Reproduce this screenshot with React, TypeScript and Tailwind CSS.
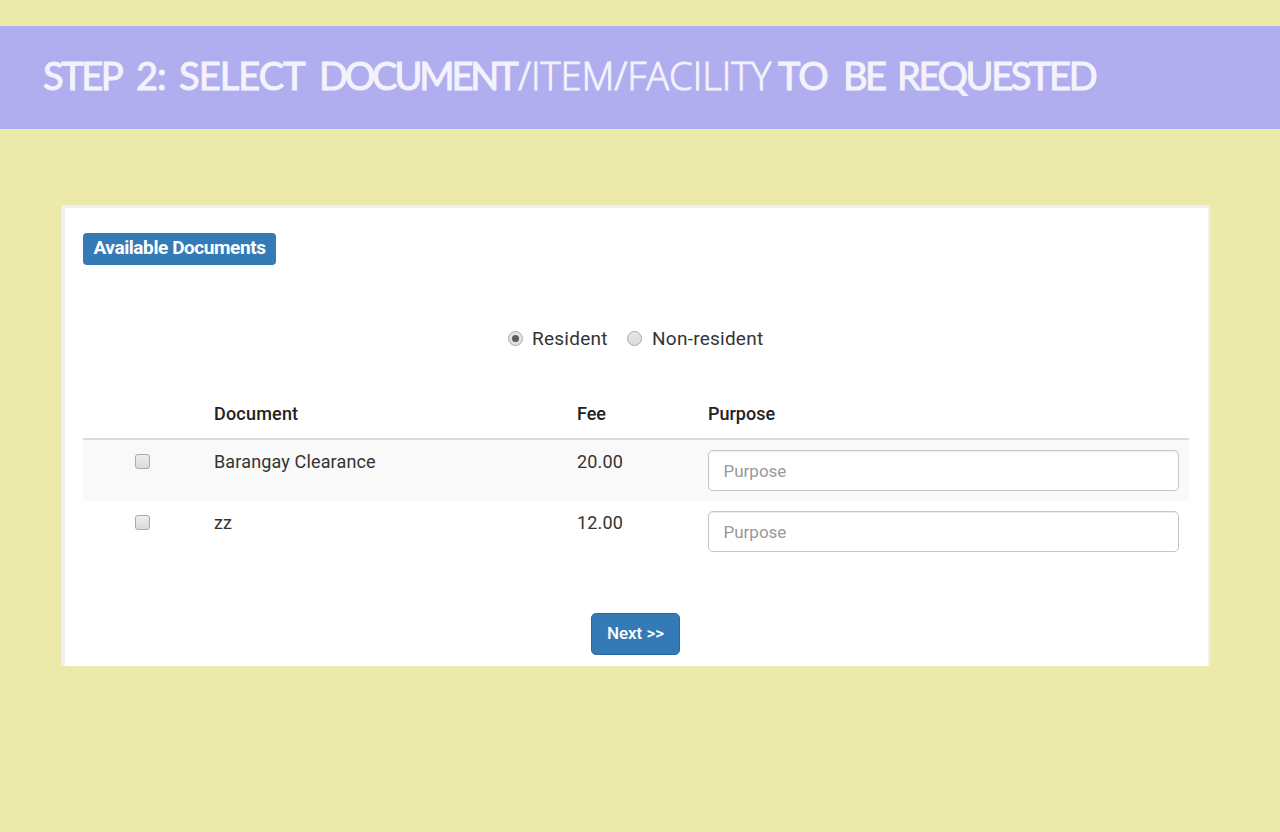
import React from 'react';

const rows = [
  { name: 'Barangay Clearance', fee: '20.00' },
  { name: 'zz', fee: '12.00' },
];

const words = [
  { text: 'STEP', style: "w-[93px] tracking-[-2.4px] font-['Lato',sans-serif] [-webkit-text-stroke:1px_#f4f3fd]" },
  { text: '2:', style: "w-[43px] tracking-[-1px] font-['Lato',sans-serif] [-webkit-text-stroke:1px_#f4f3fd]" },
  { text: 'SELECT', style: "w-[140px] tracking-[-0.9px] font-['Lato',sans-serif] [-webkit-text-stroke:1px_#f4f3fd]" },
  { text: 'DOCUMENT', style: "w-[199px] tracking-[-3.1px] font-['Lato',sans-serif] [-webkit-text-stroke:1px_#f4f3fd]" },
  { text: '/ITEM/FACILITY', style: "w-[260px] tracking-[0px] font-['Open_Sans',sans-serif] font-light text-[38px] [-webkit-text-stroke:0.9px_#f4f3fd]" },
  { text: 'TO', style: "w-[65px] tracking-[-1px] font-['Lato',sans-serif] [-webkit-text-stroke:1px_#f4f3fd]" },
  { text: 'BE', style: "w-[54px] tracking-[-2.5px] font-['Lato',sans-serif] [-webkit-text-stroke:1px_#f4f3fd]" },
  { text: 'REQUESTED', style: "w-[200px] tracking-[-2.35px] font-['Lato',sans-serif] [-webkit-text-stroke:1px_#f4f3fd]" },
];

function Radio({ checked = false }: { checked?: boolean }) {
  return (
    <span className="mb-[2px] flex size-[15px] shrink-0 items-center justify-center rounded-full border border-[#aaa] bg-linear-to-b from-[#e6e6e6] to-[#dcdcdc]">
      {checked && <span className="size-[7px] rounded-full bg-[#5c5c5c]" />}
    </span>
  );
}

export default function App() {
  return (
    <div className="h-[832px] w-[1280px] overflow-hidden bg-[#ebeaab] pt-[26px] font-['Roboto',sans-serif] text-[18px] text-[#333]">
      <h1 className="flex h-[103px] items-baseline bg-[#b1aef0] pt-[20.5px] pl-[43px] text-[38px] leading-[56px] text-[#f4f3fd]">
        {words.map((w) => (
          <span key={w.text} className={`shrink-0 whitespace-nowrap ${w.style}`}>
            {w.text}
          </span>
        ))}
      </h1>
      <main className="mt-[76px] ml-[61px] h-[461px] w-[1149px] border-t-[3px] border-r-2 border-l-4 border-[#edf0f5] bg-white pt-[25px] pr-[19px] pl-[18px]">
        <h2 className="flex h-[32px] w-[193px] items-center justify-center rounded-[4px] bg-[#337ab7] pb-px text-[19px] font-bold tracking-[-0.42px] whitespace-nowrap text-white">
          Available Documents
        </h2>
        <div className="mt-[61px] flex h-[26px] items-center pl-[425px] text-[19px] tracking-[0.25px] whitespace-nowrap">
          <Radio checked />
          <span className="ml-[9px] w-[95px]">Resident</span>
          <Radio />
          <span className="ml-[10px]">Non-resident</span>
        </div>
        <table className="mt-[37px] w-[1106px] table-fixed border-separate border-spacing-0 text-left">
          <colgroup>
            <col className="w-[121px]" />
            <col className="w-[363px]" />
            <col className="w-[131px]" />
            <col />
          </colgroup>
          <thead>
            <tr className="h-[51px] align-middle text-[#222] [&>th]:border-b-2 [&>th]:border-[#d9d9d9]">
              <th />
              <th className="pl-[10px] font-medium tracking-[0.2px]">Document</th>
              <th className="pl-[10px] font-medium">Fee</th>
              <th className="pl-[10px] font-medium">Purpose</th>
            </tr>
          </thead>
          <tbody>
            {rows.map((r) => (
              <tr key={r.name} className="h-[61px] align-top tracking-[0.15px] odd:bg-[#f9f9f9]">
                <td className="pt-[14px] pl-[52px]">
                  <span className="block size-[15px] rounded-[3px] border border-[#aaa] bg-linear-to-b from-[#eee] to-[#dadada]" />
                </td>
                <td className="pt-[8px] pl-[10px] leading-[27px]">{r.name}</td>
                <td className="pt-[8px] pl-[10px] leading-[27px]">{r.fee}</td>
                <td className="pt-[10px] pr-[10px] pl-[10px]">
                  <input
                    type="text"
                    placeholder="Purpose"
                    className="block h-[41px] w-full rounded-[5px] border border-[#c6c6c6] bg-white px-[14.5px] text-[17px] tracking-normal shadow-[inset_0_1px_1px_rgba(0,0,0,0.075)] placeholder:text-[#999]"
                  />
                </td>
              </tr>
            ))}
          </tbody>
        </table>
        <button className="mt-[51px] ml-[508px] flex h-[42px] w-[89px] items-center justify-center rounded-[5px] border border-[#2869a3] bg-[#337ab7] text-[17px] font-medium tracking-[-0.05px] whitespace-nowrap text-white">
          Next &gt;&gt;
        </button>
      </main>
    </div>
  );
}
